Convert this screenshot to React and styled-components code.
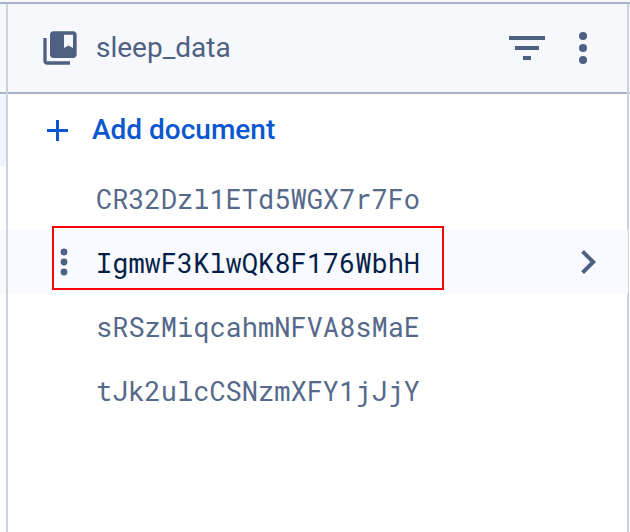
import React from "react";
import styled, { createGlobalStyle } from "styled-components";

const GlobalStyle = createGlobalStyle`
  * { box-sizing: border-box; }
  body { margin: 0; background: #fff; font-family: Roboto, sans-serif; }
`;

const Backdrop = styled.div`
  padding-top: 2px;
  background: #f6f8fc;
`;

const Page = styled.main`
  display: grid;
  grid-template-columns: 6px minmax(0, 1fr) 1px;
  min-height: calc(100vh - 2px);
  overflow: hidden;
  border-top: 2px solid #a9b4c8;
`;

const Column = styled.section`
  min-width: 0;
  background: #fff;
`;

const Panel = styled(Column)`
  border: solid #cdd3de;
  border-width: 0 2px;
`;

const Bar = styled.header`
  display: flex;
  align-items: center;
  height: 90px;
  padding: 0 24px 0 32px;
  background: #f6f8fc;
  border-bottom: 2px solid #a9b4c8;
`;

const EmptyBar = styled(Bar)`
  padding: 0;
`;

const Title = styled.h1`
  flex: 1;
  margin: 0 0 0 16px;
  font-size: 28px;
  line-height: 40px;
  font-weight: 400;
  color: #4e6182;
`;

const IconButton = styled.button`
  display: grid;
  place-items: center;
  width: ${(p) => p.$width}px;
  height: 48px;
  padding: 0;
  border: 0;
  background: none;
  color: #4e6182;
  cursor: pointer;
`;

const Icon = styled.svg`
  display: block;
  flex: none;
  fill: currentColor;
`;

const AddButton = styled.button`
  display: flex;
  align-items: center;
  gap: 24px;
  width: 100%;
  height: 72px;
  padding: 0 39px;
  border: 0;
  background: none;
  color: #0b57d0;
  font: 500 28px/40px Roboto, sans-serif;
  cursor: pointer;
`;

const List = styled.ul`
  margin: 0;
  padding: 0;
  list-style: none;
`;

const Row = styled.li`
  position: relative;
  display: grid;
  grid-template-columns: 48px minmax(0, 1fr) 48px;
  column-gap: 8px;
  align-items: center;
  height: 64px;
  margin-right: -1px;
  padding: 0 16px 0 32px;
  background: ${(p) => (p.$selected ? "#f8faff" : "none")};
  color: ${(p) => (p.$selected ? "#041e49" : "#56698a")};
`;

const DocumentLink = styled.a`
  grid-column: 2;
  padding-top: 2px;
  color: inherit;
  font: 27px/40px "Roboto Mono", "DejaVu Sans Mono", monospace;
  text-decoration: none;
  white-space: nowrap;
`;

const Outline = styled.div`
  position: absolute;
  z-index: 1;
  top: -4px;
  left: 44px;
  width: 392px;
  height: 64px;
  border: 2px solid #fa0505;
  pointer-events: none;
`;

const Strip = styled.div`
  height: ${(p) => p.$height}px;
  background: ${(p) => p.$color};
`;

const documents = [
  "CR32Dzl1ETd5WGX7r7Fo",
  "IgmwF3KlwQK8F176WbhH",
  "sRSzMiqcahmNFVA8sMaE",
  "tJk2ulcCSNzmXFY1jJjY",
];
const selectedId = documents[1];

const Dots = ({ gap, radius }) => (
  <Icon width="12" height="36" viewBox="-6 -18 12 36" aria-hidden="true">
    {[-gap, 0, gap].map((y) => (
      <circle key={y} cy={y} r={radius} />
    ))}
  </Icon>
);

function DocumentRow({ id, selected }) {
  return (
    <Row $selected={selected}>
      {selected && (
        <IconButton $width={48} aria-label="Document options">
          <Dots gap={10} radius={3.4} />
        </IconButton>
      )}
      <DocumentLink href={`#${id}`}>{id}</DocumentLink>
      {selected && (
        <IconButton $width={48} aria-label="Open document">
          <Icon width="48" height="48" viewBox="0 0 24 24" aria-hidden="true">
            <path d="M8.59 16.59 13.17 12 8.59 7.41 10 6l6 6-6 6-1.41-1.41z" />
          </Icon>
        </IconButton>
      )}
      {selected && <Outline />}
    </Row>
  );
}

export default function App() {
  return (
    <Backdrop>
      <GlobalStyle />
      <Page>
        <Column>
          <EmptyBar />
          <Strip $height={72} $color="#eff4ff" />
          <Strip $height={64} $color="#fff" />
          <Strip $height={64} $color="#f8faff" />
        </Column>
        <Panel>
          <Bar>
            <Icon width="40" height="40" viewBox="0 0 24 24" color="#4e6182" aria-hidden="true">
              <path d="M4 6H2v14c0 1.1.9 2 2 2h14v-2H4z" />
              <path d="M20 2H8c-1.1 0-2 .9-2 2v12c0 1.1.9 2 2 2h12c1.1 0 2-.9 2-2V4c0-1.1-.9-2-2-2zm-.2 10-2.7-1.5-2.7 1.5V4h5.4z" />
            </Icon>
            <Title>sleep_data</Title>
            <IconButton $width={72} aria-label="Filter">
              <Icon width="48" height="48" viewBox="0 0 24 24" aria-hidden="true">
                <path d="M10 18h4v-2h-4v2zM3 6v2h18V6H3zm3 7h12v-2H6v2z" />
              </Icon>
            </IconButton>
            <IconButton $width={40} aria-label="Collection options">
              <Dots gap={12} radius={4} />
            </IconButton>
          </Bar>
          <AddButton>
            <Icon width="21" height="21" viewBox="0 0 21 21" aria-hidden="true">
              <path d="M9 0h3v9h9v3h-9v9H9v-9H0V9h9z" />
            </Icon>
            Add document
          </AddButton>
          <List>
            {documents.map((id) => (
              <DocumentRow key={id} id={id} selected={id === selectedId} />
            ))}
          </List>
        </Panel>
        <Column>
          <EmptyBar />
        </Column>
      </Page>
    </Backdrop>
  );
}
